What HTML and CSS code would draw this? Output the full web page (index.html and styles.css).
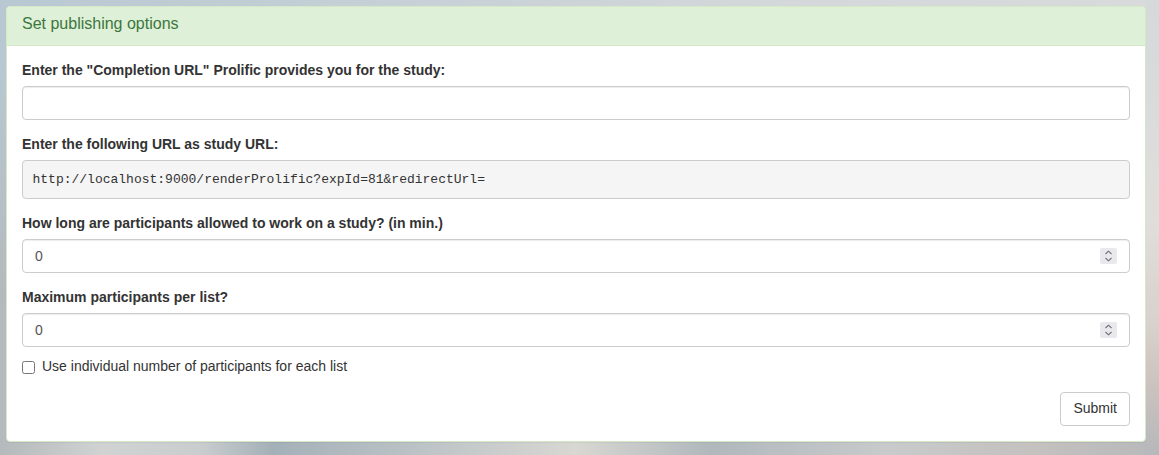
FILE: index.html
```html
<!DOCTYPE html>
<html>
<head>
<meta charset="utf-8">
<link rel="stylesheet" href="styles.css">
</head>
<body>
<div class="panel">
  <div class="panel-heading"><h3 class="panel-title">Set publishing options</h3></div>
  <form class="panel-body">
    <div class="form-group">
      <label class="label">Enter the "Completion URL" Prolific provides you for the study:</label>
      <input class="form-control" type="text">
    </div>
    <div class="form-group">
      <label class="label">Enter the following URL as study URL:</label>
      <pre class="url">http://localhost:9000/renderProlific?expId=81&amp;redirectUrl=</pre>
    </div>
    <div class="form-group">
      <label class="label">How long are participants allowed to work on a study? (in min.)</label>
      <div class="num-wrap">
        <input class="form-control num" type="number" value="0">
        <span class="spin"><svg width="17" height="16" viewBox="0 0 17 16"><path d="M5.5 6 L8.5 3.2 L11.5 6" fill="none" stroke="#6f6f78" stroke-width="1.1"/><path d="M5.5 10 L8.5 12.8 L11.5 10" fill="none" stroke="#6f6f78" stroke-width="1.1"/></svg></span>
      </div>
    </div>
    <div class="form-group last">
      <label class="label">Maximum participants per list?</label>
      <div class="num-wrap">
        <input class="form-control num" type="number" value="0">
        <span class="spin"><svg width="17" height="16" viewBox="0 0 17 16"><path d="M5.5 6 L8.5 3.2 L11.5 6" fill="none" stroke="#6f6f78" stroke-width="1.1"/><path d="M5.5 10 L8.5 12.8 L11.5 10" fill="none" stroke="#6f6f78" stroke-width="1.1"/></svg></span>
      </div>
    </div>
    <label class="check"><input type="checkbox" class="cb"><span>Use individual number of participants for each list</span></label>
    <div class="actions"><button type="button" class="btn">Submit</button></div>
  </form>
</div>
</body>
</html>
```
FILE: styles.css
```css
* { box-sizing: border-box; }
html, body { height: 100%; }
body {
  margin: 0;
  padding: 6px 13px 14px 6px;
  font-family: "Liberation Sans", Arial, sans-serif;
  font-size: 14px;
  line-height: 1.42857;
  color: #333;
  background: linear-gradient(90deg, #b4b9bb 0, #d0d3d2 103px, #c9cdce 200px, #a4b0b8 273px, #c0c6c8 443px, #d8d7d2 576px, #b0b8bc 710px, #c8cacb 887px, #c4c1bf 1035px, #b8b9bb 1159px);
  position: relative;
}
body::before {
  content: "";
  position: absolute;
  left: 0; right: 0; top: 0;
  height: 300px;
  background: linear-gradient(90deg, #b8c8d2 0, #c6d0d6 400px, #d4d8da 800px, #d8dadb 1159px);
  -webkit-mask-image: linear-gradient(180deg, #000 0, #000 60px, transparent 300px);
  mask-image: linear-gradient(180deg, #000 0, #000 60px, transparent 300px);
  z-index: 0;
}
body::after {
  content: "";
  position: absolute;
  right: 0; top: 0; bottom: 0;
  width: 14px;
  background: linear-gradient(180deg, #d5d9da 0, #dadcdb 120px, #e0dedb 220px, #d8d0cb 330px, #cdc3bf 380px, #b6b8bb 455px);
  z-index: 0;
}
.panel {
  position: relative;
  z-index: 1;
  background: #fff;
  border: 1px solid #d6e9c6;
  border-radius: 4px;
  box-shadow: 0 1px 1px rgba(0,0,0,.05);
}
.panel-heading {
  background: #dff0d8;
  color: #3c763d;
  border-bottom: 1px solid #d6e9c6;
  padding: 8px 15px 0;
  height: 39px;
  border-radius: 3px 3px 0 0;
}
.panel-title {
  margin: 0;
  font-size: 16px;
  font-weight: normal;
  line-height: 1.1;
}
.panel-body { padding: 15px; display: block; }
.form-group { margin-bottom: 15px; }
.form-group.last { margin-bottom: 10px; }
.label {
  display: block;
  font-weight: bold;
  margin-bottom: 5px;
  height: 20px;
}
.form-control {
  display: block;
  width: 100%;
  height: 34px;
  padding: 6px 12px;
  font-family: "Liberation Sans", Arial, sans-serif;
  font-size: 14px;
  line-height: 1.42857;
  color: #555;
  background: #fff;
  border: 1px solid #ccc;
  border-radius: 4px;
  box-shadow: inset 0 1px 1px rgba(0,0,0,.075);
  outline: none;
}
.num { -moz-appearance: textfield; }
.num::-webkit-inner-spin-button, .num::-webkit-outer-spin-button { -webkit-appearance: none; margin: 0; }
.num-wrap { position: relative; }
.spin {
  position: absolute;
  right: 13px;
  top: 9px;
  width: 17px;
  height: 16px;
  background: #e9e9ed;
  border-radius: 2px;
  display: flex;
}
.url {
  margin: 0;
  padding: 9.5px;
  font-family: "Liberation Mono", "Courier New", monospace;
  font-size: 13px;
  line-height: 1.42857;
  color: #333;
  background: #f5f5f5;
  border: 1px solid #ccc;
  border-radius: 4px;
  height: 39px;
}
.check {
  display: flex;
  align-items: center;
  height: 20px;
  cursor: pointer;
}
.cb {
  width: 13px;
  height: 13px;
  margin: 1px 7px 0 0;
}
.actions {
  display: flex;
  justify-content: flex-end;
  margin-top: 15px;
}
.btn {
  height: 34px;
  padding: 6px 12px;
  font-family: "Liberation Sans", Arial, sans-serif;
  font-size: 14px;
  line-height: 1.42857;
  color: #333;
  background: #fff;
  border: 1px solid #ccc;
  border-radius: 4px;
}
```
